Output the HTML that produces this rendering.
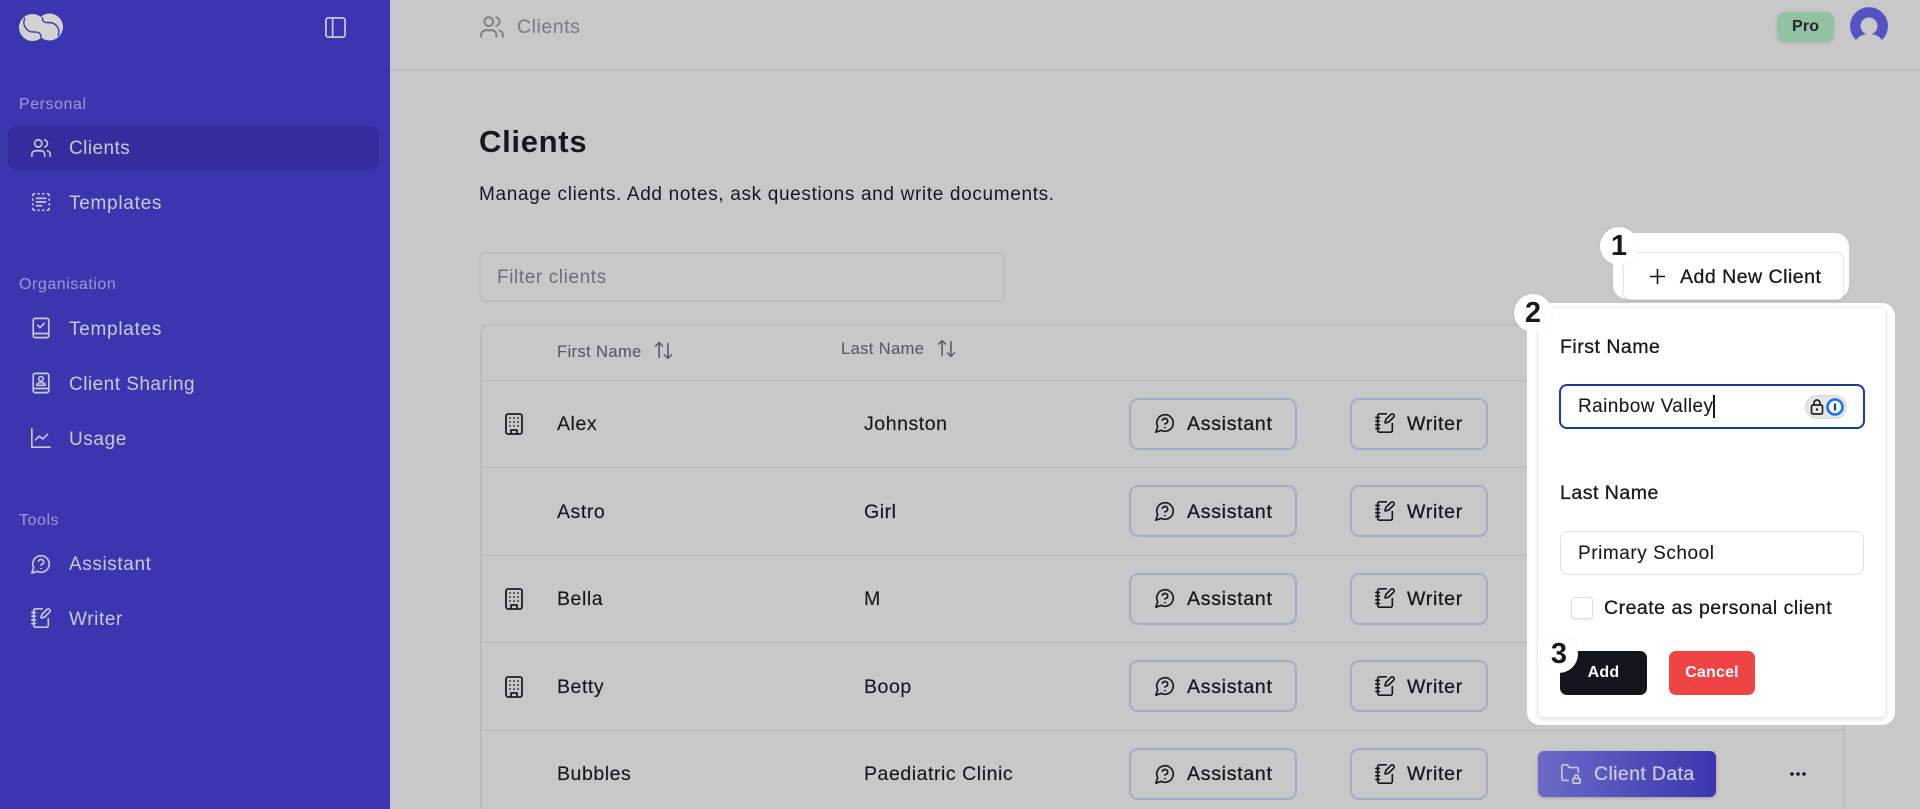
<!DOCTYPE html>
<html><head><meta charset="utf-8"><title>Clients</title>
<style>
*{box-sizing:border-box}
html,body{margin:0;padding:0;width:1920px;height:809px;overflow:hidden;background:#c8c8c8;font-family:"Liberation Sans",sans-serif;color:#15191f}
#page{position:relative;width:1920px;height:809px;overflow:hidden;background:#c8c8c8}
.a{position:absolute}
.t{position:absolute;line-height:24px;height:24px;white-space:nowrap;font-size:19px;letter-spacing:.6px}
.r{font-size:19.5px;letter-spacing:.55px;-webkit-text-stroke:.15px currentColor}
.b{font-size:19.5px;letter-spacing:.72px;-webkit-text-stroke:.3px currentColor}
.m{font-size:19.5px;letter-spacing:.5px;-webkit-text-stroke:.3px currentColor}
.f{letter-spacing:.42px;-webkit-text-stroke:.1px currentColor}
svg.i{position:absolute;fill:none;stroke:currentColor;stroke-width:1.8;stroke-linecap:round;stroke-linejoin:round}
#side{position:absolute;left:0;top:0;width:390px;height:809px;background:#3b36b0}
.nav{color:#c9c9d6}
.sec{color:#9593d3;font-size:16px;letter-spacing:.55px;-webkit-text-stroke:.1px currentColor}
.line{position:absolute;left:480px;width:1365px;height:1px;background:#b8b8b8}
.btn{position:absolute;border:2px solid #a6acc6;border-radius:9px}
.h{font-size:16.500px;color:#575b63;letter-spacing:.4px;-webkit-text-stroke:.1px currentColor}
.bub{position:absolute;width:38px;height:38px;border-radius:50%;background:#fff;text-align:center;line-height:38px;font-size:29px;font-weight:700;color:#15191f}
</style></head><body>
<svg width="0" height="0" style="position:absolute"><defs>
<symbol id="users" viewBox="0 0 24 24"><path d="M16 21v-2a4 4 0 0 0-4-4H6a4 4 0 0 0-4 4v2"/><circle cx="9" cy="7" r="4"/><path d="M22 21v-2a4 4 0 0 0-3-3.870"/><path d="M16 3.130a4 4 0 0 1 0 7.750"/></symbol>
<symbol id="dash" viewBox="0 0 24 24"><path d="M5 3a2 2 0 0 0-2 2M19 3a2 2 0 0 1 2 2M21 19a2 2 0 0 1-2 2M5 21a2 2 0 0 1-2-2M9 3h1M9 21h1M14 3h1M14 21h1M3 9v1M21 9v1M3 14v1M21 14v1M7 8h10M7 12h10M7 16h6"/></symbol>
<symbol id="bookc" viewBox="0 0 24 24"><rect x="3.500" y="1.500" width="17" height="21" rx="2"/><path d="M3.500 18h17M8.500 9l2.500 2.500 4.500-4.500"/></symbol>
<symbol id="booku" viewBox="0 0 24 24"><rect x="3.500" y="1.500" width="17" height="21" rx="2"/><path d="M3.500 18h17"/><circle cx="12" cy="7.500" r="2.500"/><path d="M7.500 14.500c0-2 2-3 4.500-3s4.500 1 4.500 3z"/></symbol>
<symbol id="chart" viewBox="0 0 24 24"><path d="M2 2v20h20M6 14l4-4 4 3 5-5"/></symbol>
<symbol id="msg" viewBox="0 0 24 24"><path d="M7.900 20A9 9 0 1 0 4 16.100L2 22Z"/><path d="M9.090 9a3 3 0 0 1 5.830 1c0 2-3 3-3 3"/><path d="M12 17h.01"/></symbol>
<symbol id="pen" viewBox="0 0 24 24"><path d="M13.400 2H6a2 2 0 0 0-2 2v16a2 2 0 0 0 2 2h12a2 2 0 0 0 2-2v-7.400"/><path d="M2 6h4M2 10h4M2 14h4M2 18h4"/><path d="M21.378 5.626a1 1 0 1 0-3.004-3.004l-5.010 5.012a2 2 0 0 0-.506.854l-.837 2.870a.5.5 0 0 0 .62.62l2.870-.837a2 2 0 0 0 .854-.506z"/></symbol>
<symbol id="bld" viewBox="0 0 24 24"><rect x="4" y="2" width="16" height="20" rx="2"/><path d="M9 22v-4h6v4M8 6h.01M16 6h.01M12 6h.01M12 10h.01M12 14h.01M16 10h.01M16 14h.01M8 10h.01M8 14h.01"/></symbol>
<symbol id="sort" viewBox="0 0 24 24"><path d="M21 17l-4 4-4-4M17 21V4M3 7l4-4 4 4M7 3v17"/></symbol>
</defs></svg>
<div id="page">

<!-- main -->
<svg class="i" style="left:479px;top:14px;color:#7d8186" width="26" height="26"><use href="#users"/></svg>
<span class="t r" style="left:517px;top:15px;color:#7d8186">Clients</span>
<div class="a" style="left:390px;top:69px;width:1530px;height:2px;background:#bdbdbd"></div>

<div class="a" style="left:1777px;top:12px;width:57px;height:30px;background:#93c2a3;border-radius:8px;box-shadow:0 1px 3px rgba(0,0,0,.12)"></div>
<span class="t" style="left:1792px;top:15px;font-size:16px;font-weight:700;color:#23272e;letter-spacing:.2px">Pro</span>
<svg class="a" style="left:1849px;top:6px" width="40" height="36" viewBox="0 0 40 36"><path d="M7 34A19 19 0 1 1 33 34C30 30 26 28 20 28S10 30 7 34Z" fill="#5552c4"/><circle cx="20" cy="20" r="8.500" fill="#c8c8c8"/></svg>

<span class="t" style="left:479px;top:124px;height:36px;line-height:36px;font-size:31px;font-weight:700;letter-spacing:.7px">Clients</span>
<span class="t" style="left:479px;top:183px;letter-spacing:.66px">Manage clients. Add notes, ask questions and write documents.</span>

<div class="a" style="left:479px;top:252px;width:526px;height:50px;border:2px solid #bcbcbc;border-radius:7px"></div>
<span class="t" style="left:497px;top:266px;color:#6c7076">Filter clients</span>

<!-- table -->
<div class="a" style="left:480px;top:324px;width:1365px;height:520px;border:2px solid #bdbdbd;border-radius:9px"></div>
<div class="line" style="top:380px"></div><div class="line" style="top:467px"></div><div class="line" style="top:555px"></div><div class="line" style="top:642px"></div><div class="line" style="top:730px"></div>

<span class="t h" style="left:557px;top:340px">First Name</span>
<svg class="i" style="left:653px;top:340px;color:#575b63" width="21" height="21"><use href="#sort"/></svg>
<span class="t h" style="left:841px;top:337px">Last Name</span>
<svg class="i" style="left:936px;top:338px;color:#575b63" width="21" height="21"><use href="#sort"/></svg>

<!-- row 1 -->
<svg class="i" style="left:502px;top:412px;color:#1a1e26" width="24" height="24"><use href="#bld"/></svg>
<span class="t r" style="left:557px;top:412px">Alex</span><span class="t r" style="left:864px;top:412px">Johnston</span>
<div class="btn" style="left:1129px;top:398px;width:168px;height:52px"></div>
<svg class="i" style="left:1154px;top:412px" width="22" height="22"><use href="#msg"/></svg>
<span class="t b" style="left:1187px;top:412px">Assistant</span>
<div class="btn" style="left:1350px;top:398px;width:138px;height:52px"></div>
<svg class="i" style="left:1374px;top:412px" width="22" height="22"><use href="#pen"/></svg>
<span class="t b" style="left:1407px;top:412px">Writer</span>
<!-- row 2 -->
<span class="t r" style="left:557px;top:500px">Astro</span><span class="t r" style="left:864px;top:500px">Girl</span>
<div class="btn" style="left:1129px;top:485px;width:168px;height:52px"></div>
<svg class="i" style="left:1154px;top:500px" width="22" height="22"><use href="#msg"/></svg>
<span class="t b" style="left:1187px;top:500px">Assistant</span>
<div class="btn" style="left:1350px;top:485px;width:138px;height:52px"></div>
<svg class="i" style="left:1374px;top:500px" width="22" height="22"><use href="#pen"/></svg>
<span class="t b" style="left:1407px;top:500px">Writer</span>
<!-- row 3 -->
<svg class="i" style="left:502px;top:587px;color:#1a1e26" width="24" height="24"><use href="#bld"/></svg>
<span class="t r" style="left:557px;top:587px">Bella</span><span class="t r" style="left:864px;top:587px">M</span>
<div class="btn" style="left:1129px;top:573px;width:168px;height:52px"></div>
<svg class="i" style="left:1154px;top:587px" width="22" height="22"><use href="#msg"/></svg>
<span class="t b" style="left:1187px;top:587px">Assistant</span>
<div class="btn" style="left:1350px;top:573px;width:138px;height:52px"></div>
<svg class="i" style="left:1374px;top:587px" width="22" height="22"><use href="#pen"/></svg>
<span class="t b" style="left:1407px;top:587px">Writer</span>
<!-- row 4 -->
<svg class="i" style="left:502px;top:675px;color:#1a1e26" width="24" height="24"><use href="#bld"/></svg>
<span class="t r" style="left:557px;top:675px">Betty</span><span class="t r" style="left:864px;top:675px">Boop</span>
<div class="btn" style="left:1129px;top:660px;width:168px;height:52px"></div>
<svg class="i" style="left:1154px;top:675px" width="22" height="22"><use href="#msg"/></svg>
<span class="t b" style="left:1187px;top:675px">Assistant</span>
<div class="btn" style="left:1350px;top:660px;width:138px;height:52px"></div>
<svg class="i" style="left:1374px;top:675px" width="22" height="22"><use href="#pen"/></svg>
<span class="t b" style="left:1407px;top:675px">Writer</span>
<!-- row 5 -->
<span class="t r" style="left:557px;top:762px">Bubbles</span><span class="t r" style="left:864px;top:762px">Paediatric Clinic</span>
<div class="btn" style="left:1129px;top:748px;width:168px;height:52px"></div>
<svg class="i" style="left:1154px;top:763px" width="22" height="22"><use href="#msg"/></svg>
<span class="t b" style="left:1187px;top:762px">Assistant</span>
<div class="btn" style="left:1350px;top:748px;width:138px;height:52px"></div>
<svg class="i" style="left:1374px;top:763px" width="22" height="22"><use href="#pen"/></svg>
<span class="t b" style="left:1407px;top:762px">Writer</span>
<div class="a" style="left:1538px;top:751px;width:178px;height:46px;border-radius:6px;background:linear-gradient(90deg,#6a6ac6,#3b36b0);box-shadow:0 1px 3px rgba(0,0,0,.2)"></div>
<svg class="i" style="left:1560px;top:763px;color:#c8c8d8" width="22" height="22" viewBox="0 0 24 24"><path d="M20 10V7a2 2 0 0 0-2-2h-6.930a2 2 0 0 1-1.660-.9l-.82-1.200A2 2 0 0 0 7.930 2H4a2 2 0 0 0-2 2v13c0 1.100.9 2 2 2h5"/><rect x="14" y="17" width="8" height="5" rx="1"/><path d="M20 17v-2a2 2 0 1 0-4 0v2"/></svg>
<span class="t b" style="left:1594px;top:762px;color:#c8c8d8;letter-spacing:.38px">Client Data</span>
<svg class="a" style="left:1788px;top:769px" width="20" height="10"><circle cx="4" cy="5" r="1.800" fill="#15191f"/><circle cx="10" cy="5" r="1.800" fill="#15191f"/><circle cx="16" cy="5" r="1.800" fill="#15191f"/></svg>

<!-- sidebar -->
<div id="side">
<svg class="a" style="left:0;top:0" width="80" height="50">
<circle cx="32.500" cy="27.500" r="13.500" fill="#d2d2d2"/><circle cx="49.500" cy="27" r="13.500" fill="#d2d2d2"/>
<path d="M41 38Q41.500 31.500 33.500 32A9.500 9.500 0 0 1 25 18" fill="none" stroke="#3b36b0" stroke-width="1.400"/>
<path d="M42.500 17Q41.500 23.500 49.500 22.500A9.500 9.500 0 0 1 58 36" fill="none" stroke="#3b36b0" stroke-width="1.400"/>
</svg>
<svg class="i" style="left:324px;top:16px;color:#c9c9dc" width="23" height="23" viewBox="0 0 24 24"><rect x="2" y="2" width="20" height="20" rx="2.500"/><path d="M9 2v20"/></svg>

<span class="t sec" style="left:19px;top:93px">Personal</span>
<div class="a" style="left:8px;top:126px;width:371px;height:44px;background:#352c9e;border-radius:8px"></div>
<svg class="i nav" style="left:30px;top:137px" width="22" height="22"><use href="#users"/></svg>
<span class="t nav" style="left:69px;top:137px;letter-spacing:.45px">Clients</span>
<svg class="i nav" style="left:30px;top:191px" width="22" height="22"><use href="#dash"/></svg>
<span class="t nav" style="left:69px;top:192px;letter-spacing:.72px">Templates</span>

<span class="t sec" style="left:19px;top:273px">Organisation</span>
<svg class="i nav" style="left:30px;top:317px" width="22" height="22"><use href="#bookc"/></svg>
<span class="t nav" style="left:69px;top:318px;letter-spacing:.72px">Templates</span>
<svg class="i nav" style="left:30px;top:372px" width="22" height="22"><use href="#booku"/></svg>
<span class="t nav" style="left:69px;top:373px;letter-spacing:.48px">Client Sharing</span>
<svg class="i nav" style="left:30px;top:427px" width="22" height="22"><use href="#chart"/></svg>
<span class="t nav" style="left:69px;top:428px">Usage</span>

<span class="t sec" style="left:19px;top:509px">Tools</span>
<svg class="i nav" style="left:30px;top:553px" width="22" height="22"><use href="#msg"/></svg>
<span class="t nav" style="left:69px;top:553px">Assistant</span>
<svg class="i nav" style="left:30px;top:607px" width="22" height="22"><use href="#pen"/></svg>
<span class="t nav" style="left:69px;top:608px">Writer</span>
</div>

<!-- highlight 1 -->
<div class="a" style="left:1613px;top:233px;width:236px;height:66px;background:#fff;border-radius:14px"></div>
<div class="a" style="left:1623px;top:252px;width:221px;height:48px;background:#fff;border:1px solid #e8e8e8;border-radius:7px;box-shadow:0 1px 2px rgba(0,0,0,.12)"></div>
<svg class="a" style="left:1650px;top:269px" width="15" height="15"><path d="M7.500 0v15M0 7.500h15" stroke="#15191f" stroke-width="1.600" fill="none"/></svg>
<span class="t m" style="left:1680px;top:265px">Add New Client</span>
<div class="bub" style="left:1600px;top:227px;box-shadow:0 0 2px rgba(0,0,0,.08)">1</div>

<!-- highlight 2 -->
<div class="a" style="left:1527px;top:303px;width:368px;height:422px;background:#fff;border-radius:13px"></div>
<div class="a" style="left:1537px;top:307px;width:350px;height:411px;background:#fff;border:1px solid #ececec;border-radius:7px;box-shadow:0 2px 3px rgba(0,0,0,.1)"></div>
<div class="bub" style="left:1514px;top:294px;box-shadow:0 0 2px rgba(0,0,0,.08)">2</div>
<span class="t m" style="left:1560px;top:335px">First Name</span>
<div class="a" style="left:1559px;top:384px;width:306px;height:45px;border:2px solid #1b3c8f;border-radius:8px;background:#fff"></div>
<span class="t f" style="left:1578px;top:395px">Rainbow Valley</span>
<div class="a" style="left:1713px;top:395px;width:1.500px;height:23px;background:#15191f"></div>
<div class="a" style="left:1805px;top:395px;width:42px;height:24px;background:#e6e6e6;border:1px solid #d6d6d6;border-radius:12px"></div>
<svg class="a" style="left:1809px;top:397px" width="36" height="20" viewBox="0 0 36 20"><rect x="2.500" y="8" width="11" height="9" rx="1.500" fill="none" stroke="#222" stroke-width="1.700"/><path d="M5 8V6a3 3 0 0 1 6 0v2" fill="none" stroke="#222" stroke-width="1.700"/><circle cx="8" cy="12.500" r="1.200" fill="#222"/><circle cx="26" cy="10" r="7.500" fill="#fff" stroke="#1a73e8" stroke-width="2.600"/><path d="M26 6.500v7" stroke="#1b3c8f" stroke-width="2.200"/></svg>
<span class="t m" style="left:1560px;top:481px">Last Name</span>
<div class="a" style="left:1560px;top:531px;width:304px;height:44px;border:1px solid #e2e2e2;border-radius:8px;background:#fff"></div>
<span class="t f" style="left:1578px;top:542px;letter-spacing:.55px">Primary School</span>
<div class="a" style="left:1571px;top:597px;width:22px;height:22px;border:1px solid #dedede;border-radius:4px;background:#fff;box-shadow:0 1px 2px rgba(0,0,0,.1)"></div>
<span class="t m" style="left:1604px;top:596px">Create as personal client</span>
<div class="a" style="left:1560px;top:651px;width:87px;height:44px;background:#12151b;border-radius:7px"></div>
<span class="t" style="left:1560px;top:661px;width:87px;text-align:center;color:#fff;font-size:16px;font-weight:700;letter-spacing:.2px">Add</span>
<div class="a" style="left:1669px;top:651px;width:86px;height:44px;background:#ef4444;border-radius:7px"></div>
<span class="t" style="left:1669px;top:661px;width:86px;text-align:center;color:#fff;font-size:16px;font-weight:700;letter-spacing:.2px">Cancel</span>
<div class="bub" style="left:1540px;top:635px;box-shadow:0 0 2px rgba(0,0,0,.08)">3</div>
</div>
</body></html>
